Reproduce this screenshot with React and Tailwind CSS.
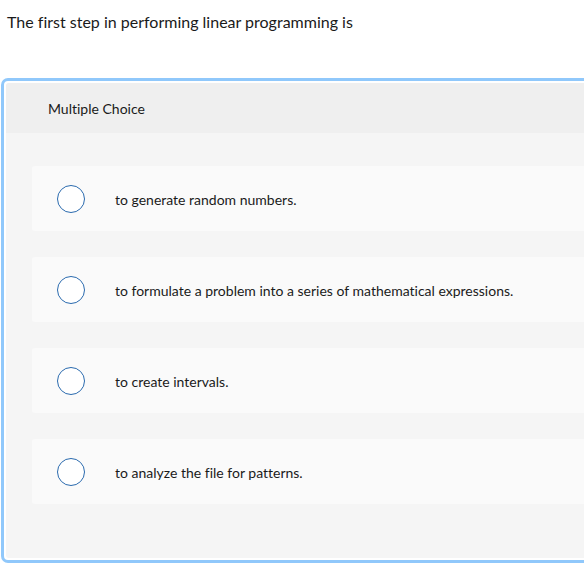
export default function App() {
  const options = [
    "to generate random numbers.",
    "to formulate a problem into a series of mathematical expressions.",
    "to create intervals.",
    "to analyze the file for patterns.",
  ];
  return (
    <div className="w-[584px] h-[573px] overflow-hidden bg-white text-[#1a1a1a] [font-variant-ligatures:none]" style={{ fontFamily: "Lato, 'Noto Sans', sans-serif" }}>
      <div className="pl-[7px] pt-[12px] text-[16px] leading-[20px]">The first step in performing linear programming is</div>
      <div className="mt-[46px] ml-[1px] w-[620px] border-[3px] border-[#90c8fb] rounded-[7px] bg-white p-[2px]">
        <div className="rounded-[3px] bg-[#f5f5f5] pb-[54px]">
          <div className="h-[50px] bg-[#efefef] flex items-center pl-[42px] text-[14px] pt-[1px] rounded-t-[3px]">Multiple Choice</div>
          <div className="pt-[33px] pl-[26px] flex flex-col gap-[26px]">
            {options.map((o) => (
              <div key={o} className="h-[65px] bg-[#fafafa] rounded-[3px] flex items-center pl-[25px]">
                <div className="w-[28px] h-[28px] rounded-full border-[1.5px] border-[#2a6aae] bg-white shrink-0" />
                <div className="ml-[30px] text-[14px] pt-[1px]">{o}</div>
              </div>
            ))}
          </div>
        </div>
      </div>
    </div>
  );
}
